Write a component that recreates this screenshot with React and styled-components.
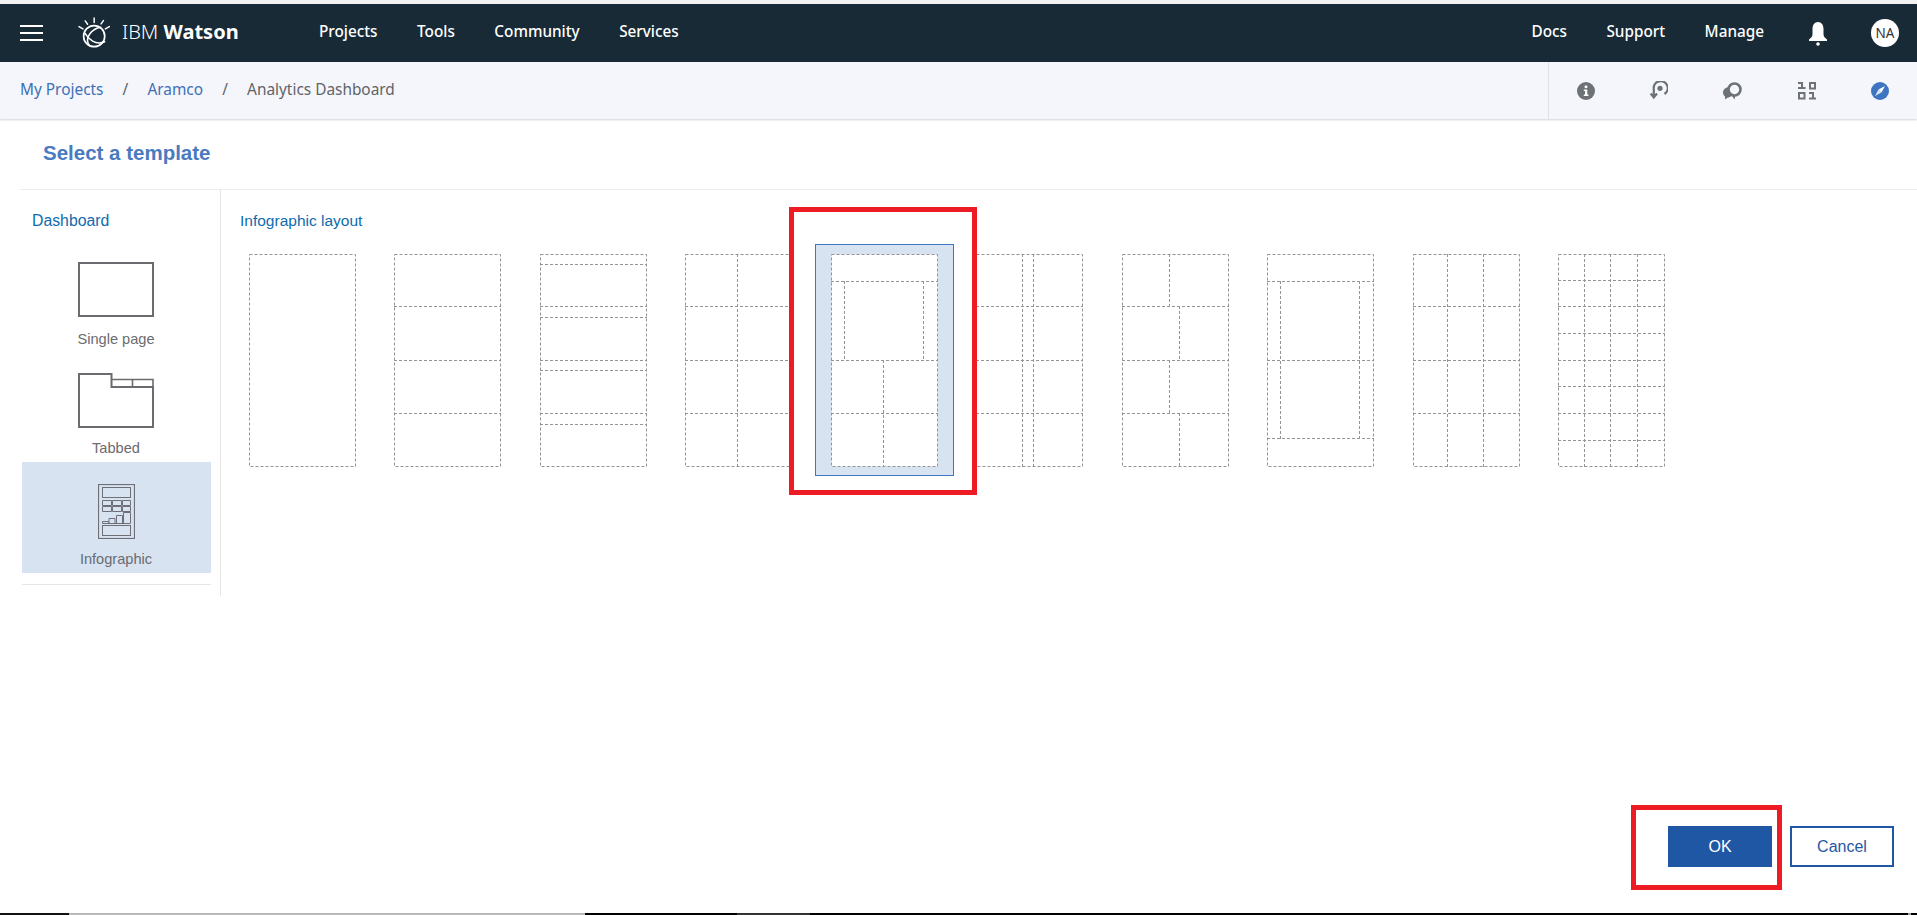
import React from "react"
import styled, { createGlobalStyle } from "styled-components"

const templates = [
  { h: [], v: [] },
  { h: [52, 106, 159], v: [] },
  { h: [10, 52, 63, 106, 116, 159, 170], v: [] },
  { h: [52, 106, 159], v: [[52, 0, 212]] },
  { h: [27, 106, 159], v: [[13, 27, 106], [92, 27, 106], [52, 106, 212]], selected: true },
  { h: [52, 106, 159], v: [[46, 0, 212], [57, 0, 212]] },
  { h: [52, 106, 159], v: [[47, 0, 52], [57, 52, 106], [47, 106, 159], [57, 159, 212]] },
  { h: [27, 106, 184], v: [[13, 27, 184], [92, 27, 184]] },
  { h: [52, 106, 159], v: [[34, 0, 212], [70, 0, 212]] },
  { h: [26, 52, 79, 106, 132, 159, 186], v: [[26, 0, 212], [52, 0, 212], [79, 0, 212]] },
]

const LogoIcon = () => (
  <svg width="33" height="32" viewBox="200 15 100 95" fill="none" stroke="#fff" strokeWidth="4.5" strokeLinecap="round">
    <path d="M252 20v14M225 29l7 10M280 28l-7 10M206 46l12 7M298 46l-12 7" />
    <circle cx="252" cy="75" r="32" strokeWidth="5" />
    <path d="M224 66c10 18 32 38 60 26" />
    <path d="M272 48c-26 4-52 32-34 56" />
  </svg>
)

const BellIcon = () => (
  <svg width="18" height="24" viewBox="0 0 18 24" fill="#fff">
    <path d="M9 0C5.500 0 3.500 3 3.500 7v5c0 2.500-1.500 4-3.500 5.500V19h18v-1.500c-2-1.500-3.500-3-3.500-5.500V7C14.500 3 12.500 0 9 0z" />
    <circle cx="9" cy="22" r="1.800" />
  </svg>
)

const InfoIcon = () => (
  <svg width="18" height="18" viewBox="0 0 18 18">
    <circle cx="9" cy="9" r="9" fill="#6d7274" />
    <circle cx="9" cy="4.800" r="1.500" fill="#fff" />
    <path d="M6.800 7.500H10.300V12.500H11.500V14H6.800V12.500H8V9H6.800z" fill="#fff" />
  </svg>
)

const RestoreIcon = () => (
  <svg width="18" height="19" viewBox="0 0 18 19" fill="none">
    <path d="M3.800 8A7 7 0 1 1 14.500 13" stroke="#6d7274" strokeWidth="2.300" />
    <circle cx="10" cy="7.300" r="2.600" fill="#6d7274" />
    <path d="M3.800 8V16M0.600 12.500L3.800 16.500L7 12.500" stroke="#6d7274" strokeWidth="2.200" />
  </svg>
)

const ChatIcon = () => (
  <svg width="19" height="18" viewBox="0 0 19 18" fill="none">
    <circle cx="5" cy="10.500" r="5" fill="#6d7274" />
    <path d="M2 13l0 4.500 3.500-2.500zM9 14l2.500 3.500 .8-3.500z" fill="#6d7274" />
    <circle cx="11.500" cy="7.500" r="6" fill="#f4f6fb" stroke="#6d7274" strokeWidth="2.600" />
  </svg>
)

const BinaryIcon = () => (
  <svg width="18" height="19" viewBox="0 0 18 19" fill="#6d7274">
    <path d="M0 1h5v5h2.500v2H0V6h3V3H0z" />
    <path d="M11 1h7v7.500h-7zM13 3v3.500h3V3z" fillRule="evenodd" />
    <path d="M0 11h7.500v7.500H0zM2 13v3.500h3.500V13z" fillRule="evenodd" />
    <path d="M11 11h5v5.500h2v2h-7v-2h3V13h-3z" />
  </svg>
)

const CompassIcon = () => (
  <svg width="18" height="18" viewBox="0 0 18 18">
    <circle cx="9" cy="9" r="9" fill="#3d75c0" />
    <path d="M14 4L10.500 10.500L7.500 7.500z" fill="#fff" />
    <path d="M4 14L7.500 7.500L10.500 10.500z" fill="#d7e3f1" />
  </svg>
)

const SinglePageIcon = () => (
  <svg width="76" height="55" viewBox="0 0 76 55" fill="none" stroke="#6b6b70" strokeWidth="2">
    <rect x="1" y="1" width="74" height="53" />
  </svg>
)

const TabbedIcon = () => (
  <svg width="76" height="55" viewBox="0 0 76 55" fill="none" stroke="#6b6b70" strokeWidth="2">
    <path d="M1 1H33.500V14H75V54H1z" />
    <path d="M33.500 6.500H75V14M54.500 6.500V14" strokeWidth="1.600" />
  </svg>
)

const InfographicIcon = () => (
  <svg width="37" height="55" viewBox="0 0 37 55" fill="none" stroke="#6f6f78">
    <rect x="0.500" y="0.500" width="36" height="54" strokeWidth="1.200" />
    <rect x="4.500" y="3.500" width="28" height="10" />
    <path d="M4.500 16.500h9v5h-9zM14.500 16.500h9v5h-9zM24.500 16.500h8v5h-8zM4.500 22.500h9v5h-9zM14.500 22.500h9v5h-9zM24.500 22.500h8v5h-8z" />
    <path d="M4.500 39.500v-2h6v2M11 39.500v-5h6v5M18.500 39.500v-8h6v8M25.500 39.500v-11h7v11M4.500 39.500h28" />
    <rect x="4.500" y="41.500" width="28" height="10" />
  </svg>
)

const Wireframe = ({ h, v }) => (
  <WireSvg width="107" height="213" viewBox="0 0 107 213">
    <rect x="0.500" y="0.500" width="106" height="212" fill="#fff" />
    {h.map(y => (
      <line key={y} x1="0" x2="107" y1={y + 0.5} y2={y + 0.5} />
    ))}
    {v.map(([x, y1, y2]) => (
      <line key={`${x}-${y1}`} x1={x + 0.5} x2={x + 0.5} y1={y1} y2={y2 + 1} />
    ))}
  </WireSvg>
)

const App = () => (
  <Page>
    <GlobalStyle />

    <TopBar>
      <Hamburger>
        <span />
        <span />
        <span />
      </Hamburger>
      <Brand>
        <LogoIcon />
        <BrandName>
          IBM <b>Watson</b>
        </BrandName>
      </Brand>
      <NavLink>Projects</NavLink>
      <NavLink>Tools</NavLink>
      <NavLink>Community</NavLink>
      <NavLink>Services</NavLink>

      <TopRight>
        <NavLink>Docs</NavLink>
        <NavLink>Support</NavLink>
        <NavLink>Manage</NavLink>
        <BellWrap>
          <BellIcon />
        </BellWrap>
        <Avatar>NA</Avatar>
      </TopRight>
    </TopBar>

    <SubBar>
      <Crumbs>
        <CrumbLink>My Projects</CrumbLink>
        <Slash>/</Slash>
        <CrumbLink>Aramco</CrumbLink>
        <Slash>/</Slash>
        <CrumbCurrent>Analytics Dashboard</CrumbCurrent>
      </Crumbs>
      <ToolIcons>
        <ToolIcon><InfoIcon /></ToolIcon>
        <ToolIcon><RestoreIcon /></ToolIcon>
        <ToolIcon><ChatIcon /></ToolIcon>
        <ToolIcon><BinaryIcon /></ToolIcon>
        <ToolIcon><CompassIcon /></ToolIcon>
      </ToolIcons>
    </SubBar>

    <TitleRow>
      <Title>Select a template</Title>
    </TitleRow>

    <Main>
      <Sidebar>
        <SideHeading>Dashboard</SideHeading>
        <SideItem>
          <SinglePageIcon />
          <SideLabel $gap={14}>Single page</SideLabel>
        </SideItem>
        <SideItem>
          <TabbedIcon />
          <SideLabel>Tabbed</SideLabel>
        </SideItem>
        <SideItem $active>
          <InfographicIcon />
          <SideLabel>Infographic</SideLabel>
        </SideItem>
        <SideRule />
      </Sidebar>

      <Gallery>
        <GalleryHeading>Infographic layout</GalleryHeading>
        <Cards>
          {templates.map((t, i) => (
            <CardSlot key={i} $selected={t.selected}>
              <Card $selected={t.selected}>
                <Wireframe h={t.h} v={t.v} />
              </Card>
            </CardSlot>
          ))}
        </Cards>
      </Gallery>
    </Main>

    <Actions>
      <OkButton>OK</OkButton>
      <CancelButton>Cancel</CancelButton>
    </Actions>
    <TaskStrip />
  </Page>
)

// Styled Components
const GlobalStyle = createGlobalStyle`
  * {
    box-sizing: border-box;
  }
  html, body {
    margin: 0;
    padding: 0;
    background: #fff;
  }
  body {
    font-family: "Liberation Sans", Arial, sans-serif;
  }
`

const Page = styled.div`
  display: flex;
  flex-direction: column;
  height: 915px;
  overflow: hidden;
  border-top: 4px solid #f1f1f1;
`

const TopBar = styled.header`
  display: flex;
  align-items: center;
  flex: none;
  height: 58px;
  padding-left: 20px;
  background: #172a36;
  color: #fff;
`

const Hamburger = styled.div`
  display: flex;
  flex-direction: column;
  gap: 5px;
  width: 23px;

  span {
    display: block;
    height: 2px;
    background: #fff;
  }
`

const Brand = styled.div`
  display: flex;
  align-items: center;
  width: 242px;
  margin-left: 34px;
  margin-top: -3px;
`

const BrandName = styled.div`
  margin-left: 12px;
  font-family: "Noto Sans", sans-serif;
  font-size: 20px;
  font-weight: 300;
  white-space: nowrap;

  b {
    font-weight: 700;
  }
`

const NavLink = styled.a`
  margin-right: 39.500px;
  margin-bottom: 4px;
  font-family: "Noto Sans", sans-serif;
  font-size: 15.300px;
  font-weight: 500;
  color: #fff;
`

const TopRight = styled.div`
  display: flex;
  align-items: center;
  margin-left: auto;
  padding-right: 18px;
`

const BellWrap = styled.div`
  display: flex;
  width: 18px;
  margin-left: 5.500px;
  margin-right: 44px;
  margin-top: 1px;
`

const Avatar = styled.div`
  display: flex;
  align-items: center;
  justify-content: center;
  width: 28px;
  height: 28px;
  border-radius: 50%;
  background: #fff;
  color: #333;
  font-family: "Noto Sans", sans-serif;
  font-size: 13.500px;
`

const SubBar = styled.div`
  display: flex;
  align-items: stretch;
  justify-content: space-between;
  flex: none;
  height: 57px;
  padding-left: 20px;
  background: #f4f6fb;
  box-shadow: 0 1px 2px rgba(0, 0, 0, 0.18);
`

const Crumbs = styled.nav`
  display: flex;
  align-items: center;
  padding-bottom: 2px;
  font-family: "Noto Sans", sans-serif;
  font-size: 15.400px;
`

const CrumbLink = styled.a`
  color: #3d6fb6;
`

const CrumbCurrent = styled.span`
  color: #5f6468;
`

const Slash = styled.span`
  width: 44px;
  text-align: center;
  color: #5f6468;
`

const ToolIcons = styled.div`
  display: flex;
  width: 369px;
  border-left: 1px solid #dfe1e6;
`

const ToolIcon = styled.div`
  display: flex;
  align-items: center;
  justify-content: center;
  width: 73.750px;
`

const TitleRow = styled.div`
  flex: none;
  height: 71px;
  margin-left: 20px;
  padding: 23px 0 0 23px;
  border-bottom: 1px solid #ececec;
`

const Title = styled.h1`
  margin: 0;
  font-size: 20.500px;
  line-height: 22px;
  font-weight: 700;
  color: #4a7abf;
`

const Main = styled.main`
  display: flex;
  flex: 1;
  align-items: flex-start;
  padding-left: 22px;
`

const Sidebar = styled.aside`
  flex: none;
  width: 199px;
  height: 406px;
  padding-right: 9px;
  border-right: 1px solid #e6e6e6;
`

const SideHeading = styled.h2`
  height: 50px;
  margin: 0;
  padding: 23px 0 0 10px;
  font-size: 15.800px;
  line-height: 16px;
  font-weight: 400;
  color: #0f6bad;
`

const SideItem = styled.div`
  display: flex;
  flex-direction: column;
  align-items: center;
  height: 111px;
  padding: 22px 1px 0 0;
  background: ${({ $active }) => ($active ? "#d7e3f1" : "transparent")};

  svg {
    display: block;
  }
`

const SideLabel = styled.div`
  margin-top: ${({ $gap }) => $gap || 12}px;
  font-size: 14.600px;
  line-height: 16px;
  color: #6b6b70;
`

const SideRule = styled.div`
  height: 1px;
  margin-top: 11px;
  background: #e6e6e6;
`

const Gallery = styled.section`
  flex: 1;
  padding-left: 12px;
`

const GalleryHeading = styled.h2`
  height: 54px;
  margin: 0;
  padding: 23px 0 0 7px;
  font-size: 15.500px;
  line-height: 16px;
  font-weight: 400;
  color: #0f6bad;
`

const Cards = styled.div`
  display: flex;
  gap: 6.440px;
`

// The red annotation frame is white inside, so it hides the neighbouring thumbnails
const CardSlot = styled.div`
  flex: none;
  position: ${({ $selected }) => ($selected ? "relative" : "static")};
  z-index: ${({ $selected }) => ($selected ? 1 : "auto")};

  ${({ $selected }) =>
    $selected &&
    `
    &::before {
      content: "";
      position: absolute;
      z-index: -1;
      top: -37px;
      left: -26px;
      right: -23px;
      bottom: -19px;
      background: #fff;
      border: 5px solid #ed1c24;
    }
  `}
`

const Card = styled.div`
  width: 139px;
  height: 232px;
  padding: 9px 15px;
  border: 1px solid ${({ $selected }) => ($selected ? "#3d75c0" : "transparent")};
  background: ${({ $selected }) => ($selected ? "#d7e3f1" : "transparent")};
`

const WireSvg = styled.svg`
  display: block;
  fill: none;

  rect, line {
    stroke: #949498;
    stroke-width: 1;
    stroke-dasharray: 3 2;
  }
`

const Actions = styled.div`
  display: flex;
  justify-content: flex-end;
  flex: none;
  gap: 18px;
  padding: 0 23px 46px 0;
`

const OkButton = styled.button`
  position: relative;
  width: 104px;
  height: 41px;
  border: none;
  background: #1f57a4;
  color: #fff;
  font-family: inherit;
  font-size: 16px;

  &::after {
    content: "";
    position: absolute;
    top: -21px;
    left: -37px;
    right: -10px;
    bottom: -23px;
    border: 5px solid #ed1c24;
  }
`

const CancelButton = styled.button`
  width: 104px;
  height: 41px;
  border: 2px solid #1f57a4;
  background: #fff;
  color: #1f57a4;
  font-family: inherit;
  font-size: 16px;
`

const TaskStrip = styled.div`
  flex: none;
  height: 2px;
  background: linear-gradient(
    to right,
    #111 0 69px,
    #b9b9b9 69px 585px,
    #000 585px 737px,
    #333 737px 810px,
    #000 810px 1908px,
    #999 1908px 1911px,
    #000 1911px
  );
`

export default App
